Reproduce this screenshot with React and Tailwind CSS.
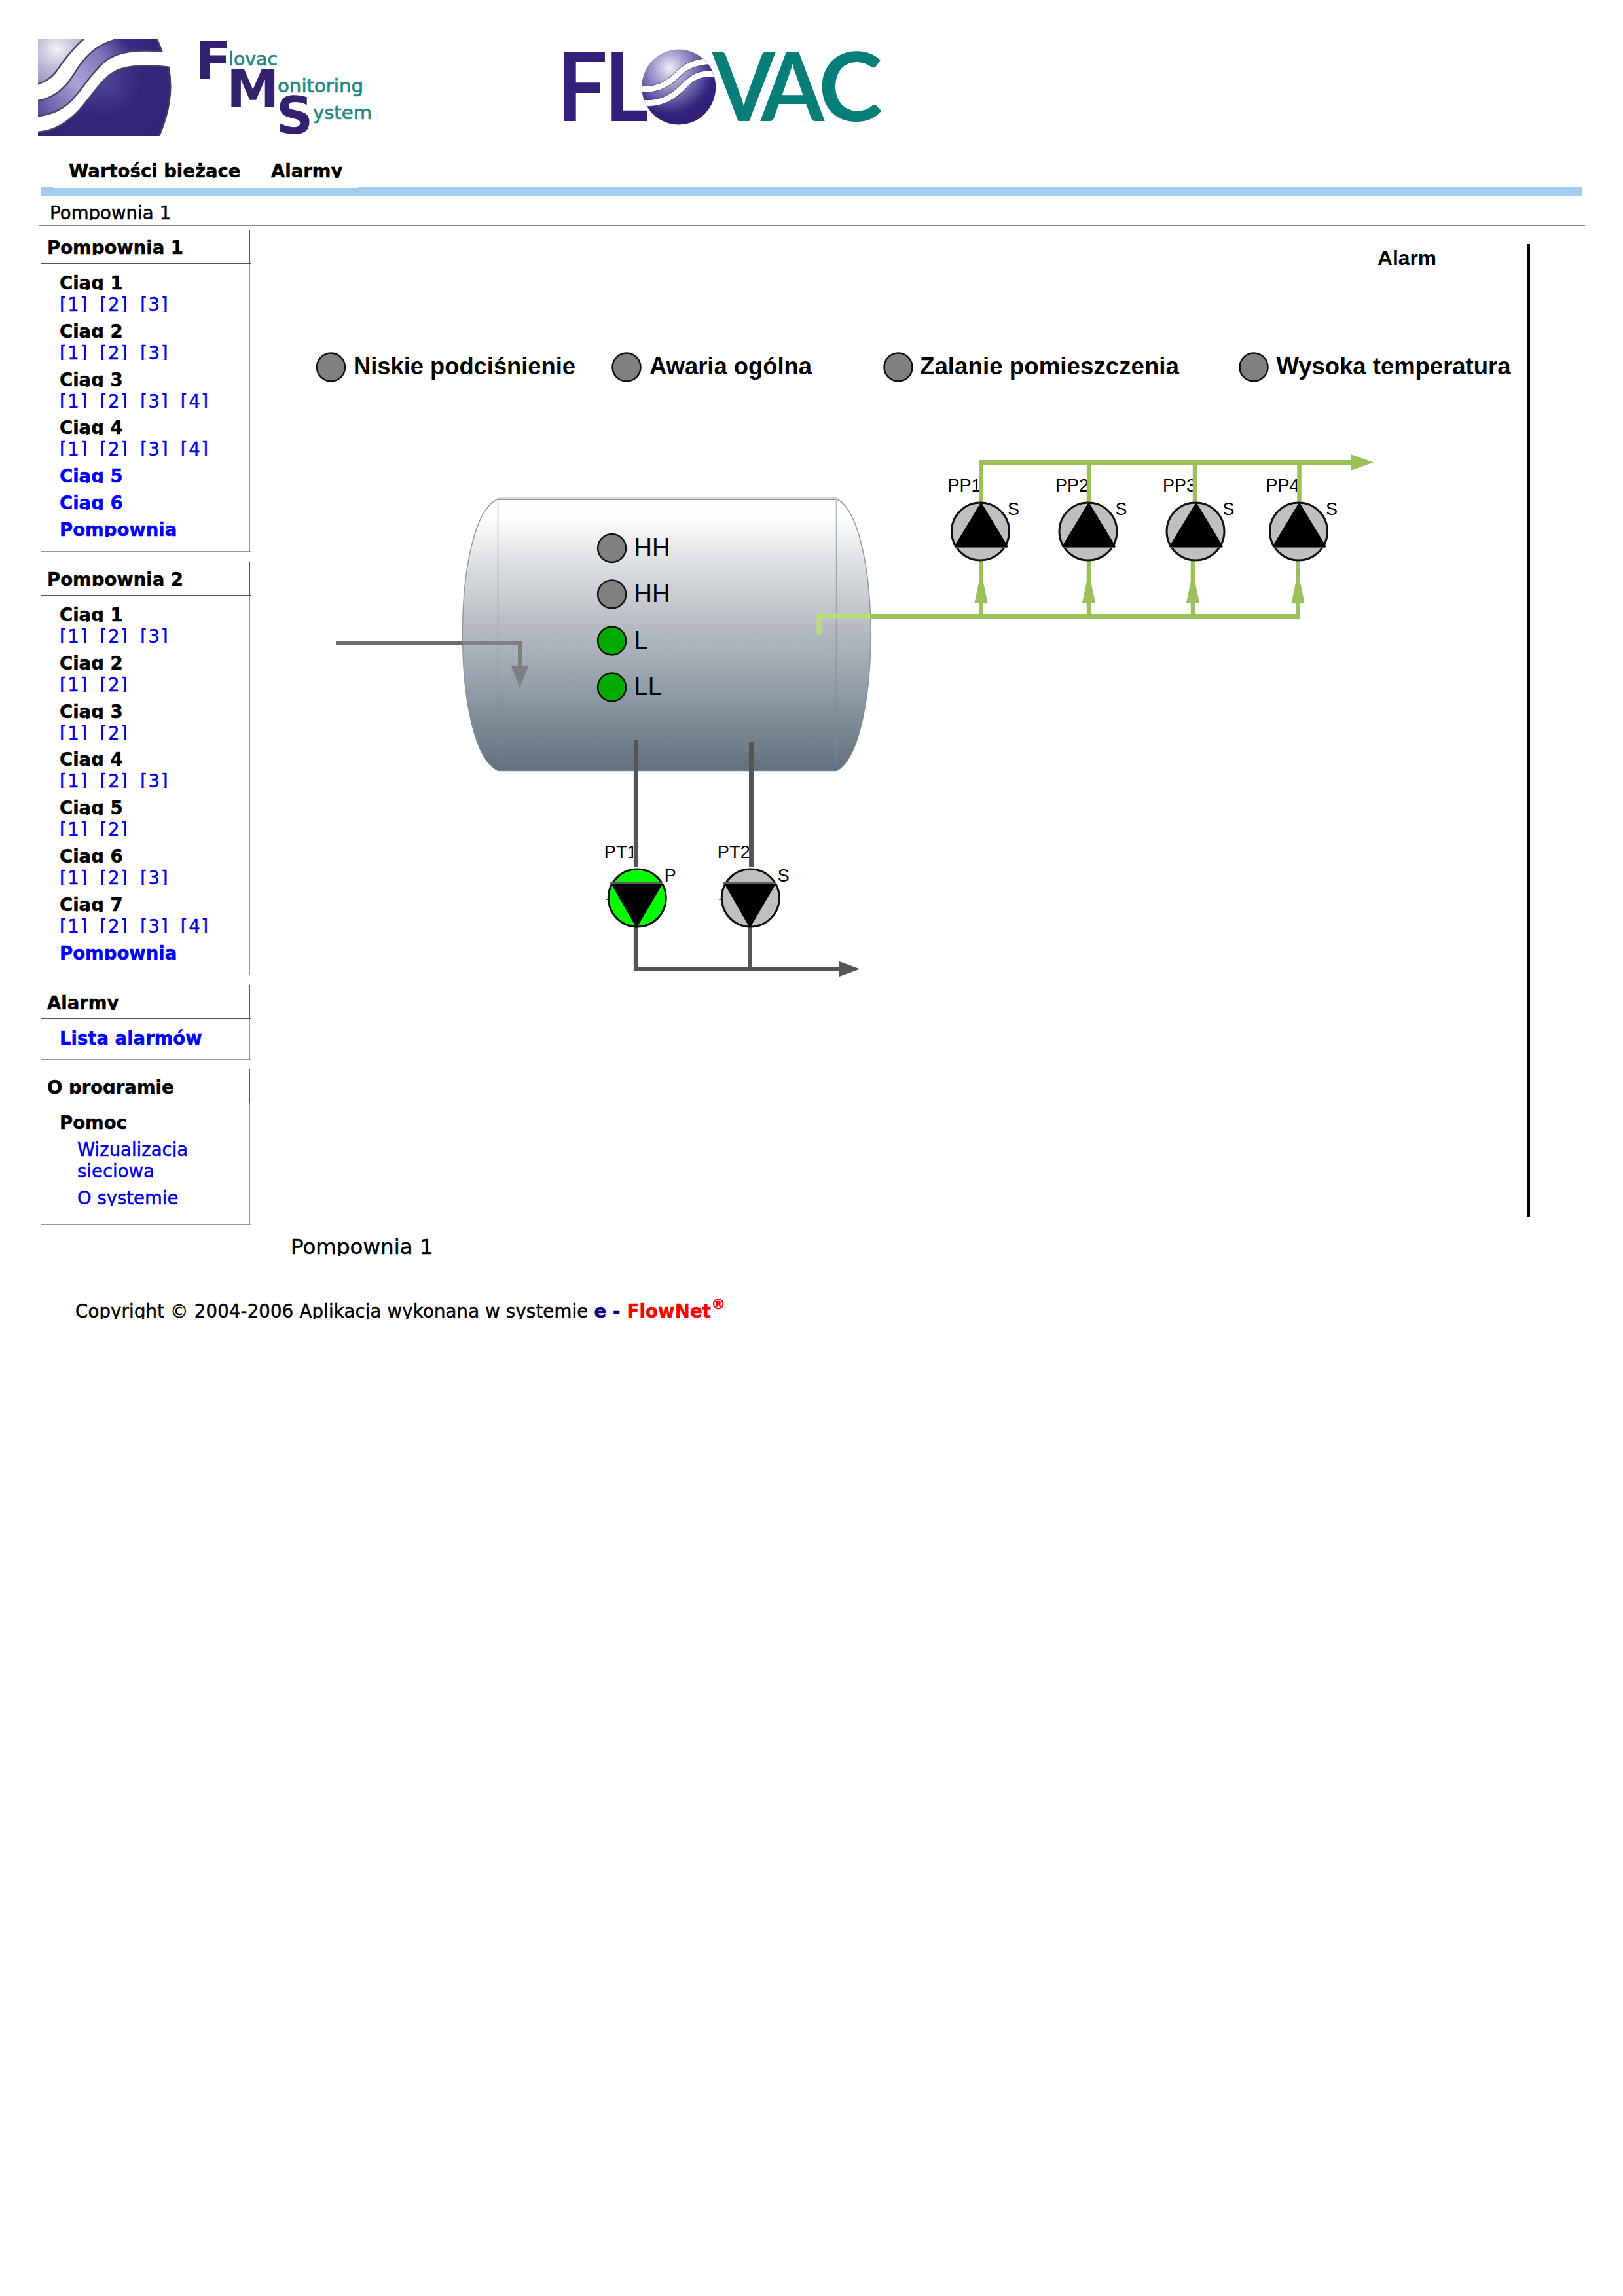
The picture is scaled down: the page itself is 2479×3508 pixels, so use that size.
import React from 'react';

const range = (n) => Array.from({ length: n }, (_, i) => i + 1);

const station1 = [
  { label: 'Ciąg 1', pages: 3 },
  { label: 'Ciąg 2', pages: 3 },
  { label: 'Ciąg 3', pages: 4 },
  { label: 'Ciąg 4', pages: 4 },
  { label: 'Ciąg 5', link: true },
  { label: 'Ciąg 6', link: true },
  { label: 'Pompownia', link: true }
];

const station2 = [
  { label: 'Ciąg 1', pages: 3 },
  { label: 'Ciąg 2', pages: 2 },
  { label: 'Ciąg 3', pages: 2 },
  { label: 'Ciąg 4', pages: 3 },
  { label: 'Ciąg 5', pages: 2 },
  { label: 'Ciąg 6', pages: 3 },
  { label: 'Ciąg 7', pages: 4 },
  { label: 'Pompownia', link: true }
];

// One line of text, cut just under the baseline
function Line({ className = '', children }) {
  return (
    <div className={`h-[28px] leading-[34px] overflow-hidden whitespace-nowrap ${className}`}>
      {children}
    </div>
  );
}

function WaveLogo() {
  return (
    <svg viewBox="50 57 574 448" preserveAspectRatio="none" className="w-[205px] h-[149px] shrink-0">
      <defs>
        <radialGradient id="waveLight" gradientUnits="userSpaceOnUse" cx="130" cy="105" r="190">
          <stop offset="0" stopColor="#f4f4f8" />
          <stop offset="0.35" stopColor="#c9c8dc" />
          <stop offset="1" stopColor="#8f8bbd" />
        </radialGradient>
        <linearGradient id="waveMid" gradientUnits="userSpaceOnUse" x1="50" y1="400" x2="560" y2="60">
          <stop offset="0" stopColor="#564c9c" />
          <stop offset="0.35" stopColor="#a9a3d6" />
          <stop offset="0.6" stopColor="#8078b8" />
          <stop offset="0.8" stopColor="#3a2d86" />
          <stop offset="1" stopColor="#2f2278" />
        </linearGradient>
        <radialGradient id="waveDark" gradientUnits="userSpaceOnUse" cx="330" cy="250" r="330">
          <stop offset="0" stopColor="#4c459c" />
          <stop offset="0.5" stopColor="#35267a" />
          <stop offset="1" stopColor="#33247a" />
        </radialGradient>
      </defs>
      <g stroke="#4a4266" strokeWidth="7">
        <path d="M40 50H256C205 92 165 150 130 205C105 240 80 256 40 270Z" fill="url(#waveLight)" />
        <path d="M40 344C105 336 155 298 195 235C245 150 285 78 425 50H556L580 116C480 108 400 112 340 158C280 210 240 290 190 345C150 385 110 405 40 414Z" fill="url(#waveMid)" />
        <path d="M40 487C120 485 185 440 245 362C300 290 340 220 400 198C460 176 540 178 609 188C628 300 610 400 566 510H40Z" fill="url(#waveDark)" />
      </g>
    </svg>
  );
}

function FmsTitle() {
  return (
    <svg viewBox="300 59 270 151" className="w-[270px] h-[151px] shrink-0 ml-[37px]">
      <g fontFamily="DejaVu Sans" fontWeight="700" fontSize="81" fill="#332270">
        <text x="298" y="120.500">F</text>
        <text x="346" y="164">M</text>
        <text x="422" y="204" fontSize="78">S</text>
      </g>
      <g fontFamily="DejaVu Sans" fontSize="29" fill="#23877f" stroke="#23877f" strokeWidth="0.7">
        <text x="349" y="100" textLength="75" lengthAdjust="spacingAndGlyphs">lovac</text>
        <text x="424" y="141" textLength="131" lengthAdjust="spacingAndGlyphs">onitoring</text>
        <text x="478" y="182" textLength="90" lengthAdjust="spacingAndGlyphs">ystem</text>
      </g>
    </svg>
  );
}

function FlovacLogo() {
  return (
    <svg viewBox="850 60 510 145" className="w-[510px] h-[145px] shrink-0 ml-[280px]">
      <defs>
        <radialGradient id="globe" cx="0.38" cy="0.27" r="0.62">
          <stop offset="0" stopColor="#f0eff8" />
          <stop offset="0.3" stopColor="#a7a2d0" />
          <stop offset="0.65" stopColor="#5b52a0" />
          <stop offset="0.85" stopColor="#33267f" />
          <stop offset="1" stopColor="#321f78" />
        </radialGradient>
        <clipPath id="globeClip">
          <ellipse cx="1036.7" cy="134" rx="56.5" ry="57.5" />
        </clipPath>
      </defs>
      <g fontFamily="Lato" fontWeight="700" fontSize="145">
        <text x="850" y="186" textLength="78" lengthAdjust="spacingAndGlyphs" fill="#34207a">F</text>
        <text x="924" y="186" textLength="66" lengthAdjust="spacingAndGlyphs" fill="#34207a">L</text>
        <text x="1088" y="186" textLength="96" lengthAdjust="spacingAndGlyphs" fill="#077f78">V</text>
        <text x="1162" y="186" textLength="97" lengthAdjust="spacingAndGlyphs" fill="#077f78">A</text>
        <text x="1250" y="186" textLength="98" lengthAdjust="spacingAndGlyphs" fill="#077f78">C</text>
      </g>
      <g clipPath="url(#globeClip)">
        <rect x="975" y="70" width="125" height="130" fill="url(#globe)" />
        <g fill="none" stroke="#4a4266" strokeWidth="10.500">
          <path d="M975 137C1005 140 1022 128 1037 113S1068 95 1098 93" />
          <path d="M978 158C1010 162 1030 148 1046 131S1074 113 1100 114" />
        </g>
        <g fill="none" stroke="#fff" strokeWidth="9">
          <path d="M975 137C1005 140 1022 128 1037 113S1068 95 1098 93" />
          <path d="M978 158C1010 162 1030 148 1046 131S1074 113 1100 114" />
        </g>
      </g>
    </svg>
  );
}

function MenuBox({ title, className, children }) {
  return (
    <section className={`w-[321px] border-b border-[#999] ${className}`}>
      <div className="border-b border-[#555]">
        <div className="mr-[2px] h-[51px] border-r border-[#555] pl-[9px] pt-[10px]">
          <Line className="font-bold">{title}</Line>
        </div>
      </div>
      <div className="mr-[2px] h-[calc(100%-52px)] border-r border-[#999] pt-[12px] pl-[28px]">
        {children}
      </div>
    </section>
  );
}

function MenuItem({ label, pages, link }) {
  return (
    <div className="mb-[12.8px]">
      <Line className={link ? 'font-bold text-[#00f]' : 'font-bold'}>{label}</Line>
      {pages && (
        <div className="mt-[5px] flex text-[#0000e6] tracking-[1.6px]">
          {range(pages).map((n) => (
            <Line key={n} className="w-[61.6px]">[{n}]</Line>
          ))}
        </div>
      )}
    </div>
  );
}

function Sidebar() {
  return (
    <aside className="w-[384px] shrink-0 pl-[63px] pt-[6px] flex flex-col gap-[15px]">
      <MenuBox title="Pompownia 1" className="h-[492px]">
        {station1.map((item) => <MenuItem key={item.label} {...item} />)}
      </MenuBox>
      <MenuBox title="Pompownia 2" className="h-[632px]">
        {station2.map((item) => <MenuItem key={item.label} {...item} />)}
      </MenuBox>
      <MenuBox title="Alarmy" className="h-[114px]">
        <MenuItem label="Lista alarmów" link />
      </MenuBox>
      <MenuBox title="O programie" className="h-[237px]">
        <MenuItem label="Pomoc" />
        <div className="pl-[27px] text-[#0000e6]">
          <Line className="h-[29px]">Wizualizacja</Line>
          <Line className="mt-[4px]">sieciowa</Line>
          <Line className="mt-[13px] h-[29px]">O systemie</Line>
        </div>
      </MenuBox>
    </aside>
  );
}

const alarms = [
  { label: 'Niskie podciśnienie', cx: 505.5, x: 540, width: 339 },
  { label: 'Awaria ogólna', cx: 957, x: 992, width: 248 },
  { label: 'Zalanie pomieszczenia', cx: 1372, x: 1405, width: 396 },
  { label: 'Wysoka temperatura', cx: 1915, x: 1949.5, width: 358 }
];

const levels = [
  { label: 'HH', y: 837.5, on: false },
  { label: 'HH', y: 908, on: false },
  { label: 'L', y: 979, on: true },
  { label: 'LL', y: 1050, on: true }
];

const outPumps = [
  { label: 'PP1', cx: 1497.5, top: 1498.5, bottom: 1498.5 },
  { label: 'PP2', cx: 1662, top: 1663, bottom: 1663 },
  { label: 'PP3', cx: 1826, top: 1825, bottom: 1822 },
  { label: 'PP4', cx: 1983.5, top: 1984.5, bottom: 1982.5 }
];

const tankPumps = [
  { label: 'PT1', cx: 973.3, state: 'P', fill: '#00ff00' },
  { label: 'PT2', cx: 1146.3, state: 'S', fill: '#c0c0c0' }
];

function Lamp({ cx, cy, on }) {
  return <circle cx={cx} cy={cy} r="21.500" fill={on ? '#00aa00' : '#808080'} stroke="#111" strokeWidth="2.500" />;
}

function Diagram() {
  return (
    <svg viewBox="384 345 2095 1535" className="w-[2095px] h-[1535px] block">
      <defs>
        <linearGradient id="tank" x1="0" y1="0" x2="0" y2="1">
          <stop offset="0" stopColor="#ffffff" />
          <stop offset="0.07" stopColor="#fcfdfd" />
          <stop offset="0.25" stopColor="#dadde0" />
          <stop offset="0.43" stopColor="#bdc1c7" />
          <stop offset="0.6" stopColor="#a2abb4" />
          <stop offset="0.78" stopColor="#84919c" />
          <stop offset="1" stopColor="#62707e" />
        </linearGradient>
        <linearGradient id="tankEdge" x1="0" y1="0" x2="0" y2="1">
          <stop offset="0" stopColor="#8f979c" />
          <stop offset="0.6" stopColor="#8f99a4" />
          <stop offset="1" stopColor="#75828e" />
        </linearGradient>
      </defs>

      {/* alarm lamps */}
      <g fontFamily="Liberation Sans" fontWeight="700" fontSize="37">
        {alarms.map((a) => (
          <g key={a.label}>
            <Lamp cx={a.cx} cy={561} />
            <text x={a.x} y="571.500" textLength={a.width} lengthAdjust="spacingAndGlyphs">{a.label}</text>
          </g>
        ))}
        <text x="2104" y="404.500" fontSize="31" textLength="90" lengthAdjust="spacingAndGlyphs">Alarm</text>
      </g>
      <rect x="2332" y="373" width="5" height="1487" />

      {/* tank */}
      <path d="M761 762H1277.500C1311 777 1330 870 1330 969S1311 1162 1277.500 1177.500H761C725 1162 706.500 1068 706.500 969S725 777 761 762Z" fill="url(#tank)" stroke="url(#tankEdge)" strokeWidth="1.500" />
      <path d="M760.500 764V1170M1277.500 764V1170" stroke="#7d8a97" strokeWidth="1.500" strokeOpacity="0.6" />
      <rect x="760" y="760" width="517" height="2" fill="#d6d9da" />
      <rect x="760" y="762" width="517" height="2" fill="#8f9596" />

      <g fontFamily="Liberation Sans" fontSize="38">
        {levels.map((l) => (
          <g key={l.y}>
            <Lamp cx={934.6} cy={l.y} on={l.on} />
            <text x="968.500" y={l.y + 11.5}>{l.label}</text>
          </g>
        ))}
      </g>

      {/* inlet */}
      <rect x="513" y="979" width="193" height="7" fill="#6b6d6d" />
      <path d="M706 979H798V1018H807L794 1051L781 1018H791V986H706Z" fill="#7f7f7f" />

      {/* pump labels sit under the pipes */}
      <g fontFamily="Liberation Sans" fontSize="28">
        {outPumps.map((p) => (
          <g key={p.label}>
            <text x={p.cx - 50} y="750.500" textLength="51" lengthAdjust="spacingAndGlyphs">{p.label}</text>
            <text x={p.cx + 41.5} y="786.500" fontSize="27">S</text>
          </g>
        ))}
        {tankPumps.map((p) => (
          <g key={p.label}>
            <text x={p.cx - 50.5} y="1311" textLength="50" lengthAdjust="spacingAndGlyphs">{p.label}</text>
            <text x={p.cx + 41.5} y="1346.500" fontSize="27">{p.state}</text>
          </g>
        ))}
      </g>

      {/* discharge pipes */}
      <g fill="#9cc15b">
        <path d="M1495 703H2063V694L2098 706.500L2063 719V710.500H1495Z" />
        <rect x="1329" y="938" width="657" height="7" />
        {outPumps.map((p) => (
          <g key={p.label}>
            <rect x={p.top - 3.25} y="703" width="6.500" height="65" />
            <rect x={p.bottom - 3.25} y="856" width="6.500" height="87" />
            <path d={`M${p.bottom} 873L${p.bottom + 10} 921H${p.bottom - 10}Z`} />
          </g>
        ))}
      </g>
      <path d="M1251 970V941H1329" fill="none" stroke="#b9dc78" strokeWidth="7" />

      {/* suction pipes */}
      <g fill="#555">
        <rect x="967" y="1178" width="2" height="147" fill="#e5e5e5" />
        <rect x="967" y="1418" width="2" height="66" fill="#e5e5e5" />
        <rect x="969" y="1131" width="6" height="194" />
        <rect x="1144" y="1133" width="7" height="192" />
        <rect x="969" y="1416" width="6" height="68" />
        <rect x="1142.500" y="1416" width="6.500" height="66" />
        <path d="M969 1477H1282V1469L1313.500 1480.500L1282 1492V1484H969Z" />
      </g>

      {outPumps.map((p) => (
        <g key={p.label}>
          <circle cx={p.cx} cy="812" r="44" fill="#c0c0c0" stroke="#111" strokeWidth="3" />
          <path d={`M${p.cx + 1} 767L${p.cx + 42} 835H${p.cx - 40}Z`} />
          <rect x={p.cx - 39} y="835" width="80" height="3" fill="#555" />
        </g>
      ))}
      {tankPumps.map((p) => (
        <g key={p.label}>
          <rect x={p.cx - 48} y="1373" width="4" height="2" fill="#555" />
          <circle cx={p.cx} cy="1372" r="44" fill={p.fill} stroke="#111" strokeWidth="3" />
          <path d={`M${p.cx - 1} 1418L${p.cx + 39} 1350H${p.cx - 40}Z`} />
          <rect x={p.cx - 42} y="1347" width="81" height="3" fill="#606060" />
        </g>
      ))}
    </svg>
  );
}

function App() {
  return (
    <div className="w-[2479px] h-[3508px] bg-white text-black text-[27.5px] font-['DejaVu_Sans',Verdana,sans-serif] overflow-hidden">
      <header className="flex items-start h-[236px] pt-[59px] pl-[58px]">
        <WaveLogo />
        <FmsTitle />
        <FlovacLogo />
      </header>

      <div className="[-webkit-text-stroke:0.5px]">
        <nav className="pl-[81px]">
          <div className="relative -mb-[2px] w-[466px] h-[52px] flex bg-white font-bold">
            <div className="w-[309px] h-[51px] border-r border-[#333] pl-[24px] pt-[8px]">
              <Line>Wartości bieżące</Line>
            </div>
            <div className="pl-[24px] pt-[8px]">
              <Line>Alarmy</Line>
            </div>
          </div>
        </nav>
        <div className="ml-[63px] w-[2353px] h-[14px] bg-[#a2cbee]" />
        <div className="ml-[59px] w-[2362px] h-[45px] pt-[8px] pl-[17px] border-b border-[#888]">
          <Line className="tracking-[0.1px]">Pompownia 1</Line>
        </div>

        <div className="flex h-[1535px]">
          <Sidebar />
          <main className="shrink-0 [-webkit-text-stroke:0]">
            <Diagram />
          </main>
        </div>

        <footer>
          <div className="ml-[444px] mt-[4px] h-[35px] leading-[42px] overflow-hidden text-[32.5px]">Pompownia 1</div>
          <div className="flex items-end ml-[115px] h-[96px] tracking-[0.2px]">
            <Line className="h-[29px]">Copyright © 2004-2006 Aplikacja wykonana w systemie&nbsp;</Line>
            <Line className="h-[29px] font-bold text-[#000080]">e -&nbsp;</Line>
            <Line className="h-[29px] font-bold text-[#f00]">FlowNet</Line>
            <span className="self-end mb-[10px] h-[24px] leading-[24px] text-[22px] font-bold text-[#f00]">®</span>
          </div>
        </footer>
      </div>
    </div>
  );
}

export default App;
